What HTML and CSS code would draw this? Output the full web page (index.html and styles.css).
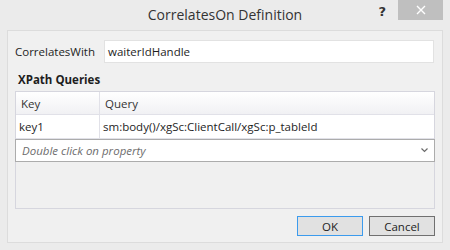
FILE: index.html
```html
<!DOCTYPE html>
<html lang="en">
  <head>
    <meta charset="UTF-8" />
    <title>CorrelatesOn Definition</title>
    <link rel="stylesheet" href="styles.css">
  </head>
  <body>
    <div class="window">
      <div class="titlebar">
        <div></div>
        <div class="title">CorrelatesOn Definition</div>
        <div class="controls">
          <span class="help">?</span>
          <span class="close">
            <svg width="10" height="10" viewBox="0 0 10 10">
              <path d="M1 1 L9 9 M9 1 L1 9" stroke="#fff" stroke-width="1.4" />
            </svg>
          </span>
        </div>
      </div>

      <div class="panel">
        <div class="field">
          <label class="field-label">CorrelatesWith</label>
          <div class="textbox">waiterIdHandle</div>
        </div>

        <div class="section-title">XPath Queries</div>
        <div class="group">
          <div class="grid-row header">
            <div class="cell key">Key</div>
            <div class="cell">Query</div>
          </div>
          <div class="grid-row">
            <div class="cell key">key1</div>
            <div class="cell">sm:body()/xgSc:ClientCall/xgSc:p_tableId</div>
          </div>
          <div class="combo">
            <span class="placeholder">Double click on property</span>
            <svg width="7" height="5" viewBox="0 0 7 5">
              <path d="M0.5 0.5 L3.5 3.5 L6.5 0.5" stroke="#6a6a6a" stroke-width="1.2" fill="none" />
            </svg>
          </div>
        </div>

        <div class="buttons">
          <button class="btn default">OK</button>
          <button class="btn">Cancel</button>
        </div>
      </div>
    </div>
  </body>
</html>
```

FILE: styles.css
```css
* {
  margin: 0;
  padding: 0;
  box-sizing: border-box;
}

body {
  width: 450px;
  height: 250px;
  background: #ebebeb;
  font-family: "Open Sans", "Noto Sans", sans-serif;
  font-size: 12px;
  color: #1e1e1e;
  overflow: hidden;
}

.window {
  height: 250px;
  padding: 0 7px 7px;
}

/* Title bar */
.titlebar {
  display: grid;
  grid-template-columns: 1fr auto 1fr;
  height: 30px;
}

.title {
  font-size: 14px;
  color: #333;
  line-height: 30px;
  padding-bottom: 1px;
}

.controls {
  display: flex;
  justify-content: flex-end;
  align-items: flex-start;
}

.help {
  font-family: "DejaVu Sans", sans-serif;
  font-weight: bold;
  font-size: 13px;
  color: #333;
  line-height: 20px;
  margin-right: 12px;
  margin-top: 2px;
}

.close {
  display: flex;
  align-items: center;
  justify-content: center;
  width: 45px;
  height: 20px;
  background: #bfbfbf;
}

/* Main panel */
.panel {
  height: 213px;
  background: #f0f0f0;
  border: 1px solid #dcdcdc;
  padding: 9px 8px 0 7px;
}

.field {
  display: flex;
  align-items: center;
}

.field-label {
  width: 89px;
  font-size: 11.5px;
}

.textbox {
  flex: 1;
  height: 23px;
  background: #fff;
  border: 1px solid #e2e2e2;
  padding-left: 3px;
  line-height: 21px;
  font-size: 11.5px;
}

.section-title {
  font-weight: bold;
  font-size: 11.5px;
  margin: 9px 0 0 3px;
  height: 19px;
}

.group {
  height: 118px;
  margin-right: -1px;
  border: 1px solid #d6d6de;
}

.grid-row {
  display: flex;
  height: 24px;
  background: #fff;
  border-bottom: 1px solid #e1e1e8;
}

.grid-row.header {
  height: 23px;
  background: linear-gradient(#fff, #f1f1f4);
  color: #333;
}

.cell {
  flex: 1;
  padding-left: 3px;
  line-height: 23px;
  font-size: 11.5px;
  white-space: nowrap;
}

.header .cell {
  padding-left: 5px;
}

.cell.key {
  flex: 0 0 84px;
  border-right: 1px solid #e1e1e8;
}

.combo {
  display: flex;
  align-items: center;
  justify-content: space-between;
  height: 23px;
  background: #fff;
  border: 1px solid #acacac;
  margin: 0 -1px;
  padding: 0 6px 0 6px;
}

.placeholder {
  font-style: italic;
  color: #6d6d6d;
  font-size: 11.5px;
}

/* Dialog buttons */
.buttons {
  display: flex;
  justify-content: flex-end;
  gap: 6px;
  margin: 7px -1px 0 0;
}

.btn {
  width: 66px;
  height: 20px;
  background: #e1e1e1;
  border: 1px solid #707070;
  font-family: inherit;
  font-size: 11.5px;
  color: #1e1e1e;
}

.btn.default {
  border-color: #3c9bed;
}
```
